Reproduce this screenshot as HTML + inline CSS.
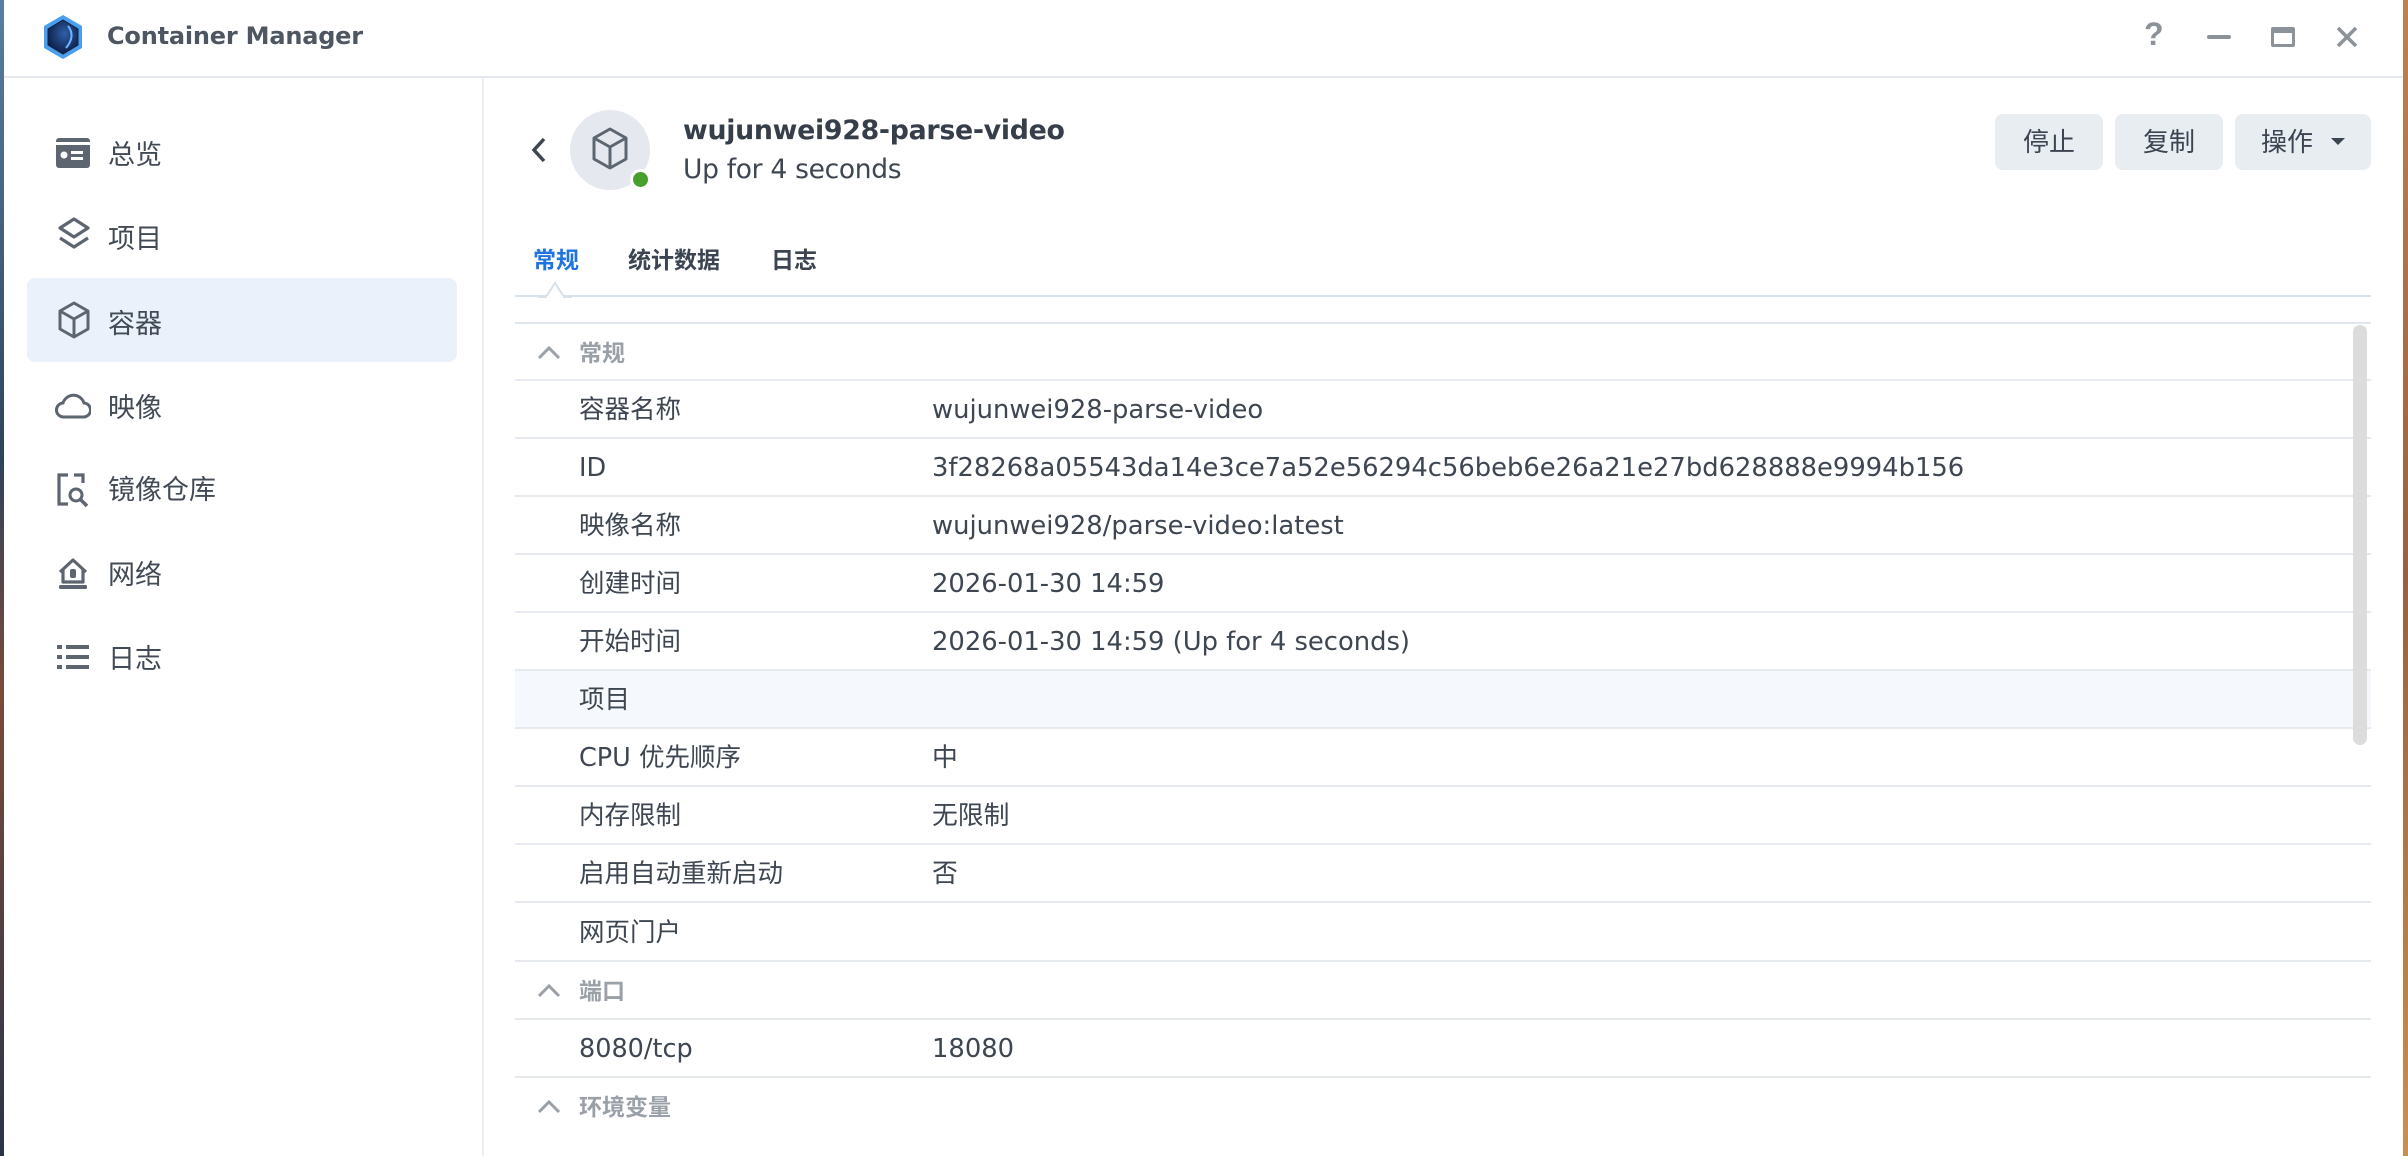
<!DOCTYPE html>
<html><head><meta charset="utf-8">
<style>
*{margin:0;padding:0;box-sizing:border-box}
body{width:2408px;height:1156px;overflow:hidden;background:#fff;position:relative;font-family:"DejaVu Sans","Liberation Sans","Noto Sans CJK SC",sans-serif;color:#3d4651}
.a{position:absolute}
.cjk{font-family:"Liberation Sans","Noto Sans CJK SC",sans-serif}
.side{font-size:27px;color:#414a55;left:108px}
.ic{position:absolute;left:55px}
.row{position:absolute;left:515px;width:1856px;height:58px;border-bottom:2px solid #e6eaef}
.row .l{position:absolute;left:64px;top:0;line-height:58px;font-size:25.5px;font-family:"DejaVu Sans","Noto Sans CJK SC",sans-serif}
.row .v{position:absolute;left:417px;top:0;line-height:58px;font-size:25.8px;font-family:"DejaVu Sans","Noto Sans CJK SC",sans-serif}
.hd .l{left:64px;color:#9aa0a7;font-weight:bold;font-size:23px;font-family:"Liberation Sans","Noto Sans CJK SC",sans-serif}
.chev{position:absolute;left:22px;top:22px}
.btn{position:absolute;top:114px;height:56px;background:#e8edf2;border-radius:8px;font-size:26px;line-height:56px;text-align:center;color:#3b4450;font-family:"Liberation Sans","Noto Sans CJK SC",sans-serif}
</style></head><body>
<div class="a" style="left:0;top:0;width:4px;height:1156px;background:linear-gradient(#5a7ea0,#30425a 40%,#7a4a3a 60%,#2a3448)"></div>
<div class="a" style="left:2403px;top:0;width:5px;height:1156px;background:linear-gradient(#c08050,#9a6040 50%,#c89050)"></div>

<!-- title bar -->
<svg class="a" style="left:40px;top:14px" width="46" height="46" viewBox="0 0 46 46">
<defs><radialGradient id="g" cx="0.55" cy="0.4" r="0.6"><stop offset="0" stop-color="#2d5fa8"/><stop offset="1" stop-color="#0d1f48"/></radialGradient></defs>
<polygon points="23,1 42,12 42,34 23,45 4,34 4,12" fill="#4a9ef0"/>
<polygon points="23,6 38,15 38,31 23,40 8,31 8,15" fill="url(#g)" stroke="#123" stroke-width="1"/>
<path d="M28 12 Q36 22 26 34" stroke="#6fb4ff" stroke-width="2" fill="none"/>
</svg>
<div class="a" style="left:107px;top:22px;font-size:24px;font-weight:bold;color:#4d5661;font-family:'DejaVu Sans',sans-serif;letter-spacing:-0.2px">Container Manager</div>
<div class="a" style="left:2144px;top:16px;font-size:32px;color:#8c9299;font-family:'Liberation Sans',sans-serif;font-weight:bold">?</div>
<div class="a" style="left:2207px;top:35px;width:24px;height:4px;background:#8c9299;border-radius:2px"></div>
<div class="a" style="left:2271px;top:27px;width:24px;height:20px;border:3px solid #8c9299;border-top-width:6px;border-radius:2px"></div>
<svg class="a" style="left:2336px;top:26px" width="22" height="22"><path d="M2 2L20 20M20 2L2 20" stroke="#8c9299" stroke-width="3.5"/></svg>
<div class="a" style="left:4px;top:76px;width:2399px;height:2px;background:#e3e8ee"></div>

<!-- sidebar -->
<div class="a" style="left:482px;top:78px;width:2px;height:1078px;background:#eceff2"></div>
<div class="a" style="left:27px;top:278px;width:430px;height:84px;background:#eaf1fb;border-radius:8px"></div>
<svg class="ic" style="top:137px" width="36" height="32"><rect x="1" y="1" width="34" height="30" rx="3" fill="#5d6670"/><rect x="1" y="5" width="34" height="3" fill="#fff"/><circle cx="9" cy="18" r="3.5" fill="#fff"/><rect x="16" y="14" width="12" height="3" fill="#fff"/><rect x="16" y="20" width="12" height="3" fill="#fff"/></svg>
<div class="a side cjk" style="top:133px">总览</div>
<svg class="ic" style="top:217px;left:57px" width="34" height="36"><path d="M17 2L31 11L17 20L3 11Z" fill="none" stroke="#5d6670" stroke-width="3.2" stroke-linejoin="round"/><path d="M3 21L17 30L31 21" fill="none" stroke="#5d6670" stroke-width="3.2" stroke-linejoin="round"/></svg>
<div class="a side cjk" style="top:217px">项目</div>
<svg class="ic" style="top:301px;left:57px" width="34" height="38"><path d="M17 2L31 10V28L17 36L3 28V10Z M3 10L17 18L31 10 M17 18V36" fill="none" stroke="#5d6670" stroke-width="3" stroke-linejoin="round"/></svg>
<div class="a side cjk" style="top:302px">容器</div>
<svg class="ic" style="top:392px" width="36" height="28"><path d="M9 25H28A7 7 0 0 0 29 11A11 11 0 0 0 8 11A7 7 0 0 0 9 25Z" fill="none" stroke="#5d6670" stroke-width="3"/></svg>
<div class="a side cjk" style="top:386px">映像</div>
<svg class="ic" style="top:473px;left:56px" width="34" height="36"><path d="M12 2H3V31H12 M18 2H27V10" fill="none" stroke="#5d6670" stroke-width="3.2"/><circle cx="20" cy="22" r="6" fill="none" stroke="#5d6670" stroke-width="3"/><path d="M24 26L31 33" stroke="#5d6670" stroke-width="3.5"/></svg>
<div class="a side cjk" style="top:468px">镜像仓库</div>
<svg class="ic" style="top:556px;left:56px" width="34" height="36"><path d="M4 16L17 4L30 16 M7 14V26H27V14" fill="none" stroke="#5d6670" stroke-width="3.2" stroke-linejoin="round"/><rect x="14" y="13" width="6" height="9" rx="2" fill="#5d6670"/><rect x="3" y="29" width="28" height="4" rx="1.5" fill="#5d6670"/></svg>
<div class="a side cjk" style="top:553px">网络</div>
<svg class="ic" style="top:644px;left:56px" width="34" height="28"><rect x="1" y="1" width="5" height="4" fill="#5d6670"/><rect x="10" y="1" width="23" height="4" fill="#5d6670"/><rect x="1" y="11" width="5" height="4" fill="#5d6670"/><rect x="10" y="11" width="23" height="4" fill="#5d6670"/><rect x="1" y="21" width="5" height="4" fill="#5d6670"/><rect x="10" y="21" width="23" height="4" fill="#5d6670"/></svg>
<div class="a side cjk" style="top:637px">日志</div>

<!-- header -->
<svg class="a" style="left:530px;top:136px" width="18" height="28"><path d="M14 3L4 14L14 25" fill="none" stroke="#3d4651" stroke-width="3.5"/></svg>
<div class="a" style="left:570px;top:110px;width:80px;height:80px;border-radius:50%;background:#e5e9ef"></div>
<svg class="a" style="left:590px;top:126px" width="40" height="46"><path d="M20 3L36 12V33L20 42L4 33V12Z M4 12L20 21L36 12 M20 21V42" fill="none" stroke="#5d6670" stroke-width="3" stroke-linejoin="round"/></svg>
<div class="a" style="left:630px;top:169px;width:21px;height:21px;border-radius:50%;background:#48a02c;border:3px solid #fff"></div>
<div class="a" style="left:683px;top:115px;font-size:26.8px;font-weight:bold;color:#363f49;letter-spacing:-0.3px">wujunwei928-parse-video</div>
<div class="a" style="left:683px;top:154px;font-size:26.5px;color:#3d4651;font-family:'DejaVu Sans',sans-serif;letter-spacing:-0.3px">Up for 4 seconds</div>
<div class="btn" style="left:1995px;width:108px">停止</div>
<div class="btn" style="left:2115px;width:108px">复制</div>
<div class="btn" style="left:2235px;width:136px;text-align:left;padding-left:26px">操作<svg style="position:absolute;left:96px;top:24px" width="14" height="8"><path d="M0 0H14L7 7Z" fill="#3b4450"/></svg></div>

<!-- tabs -->
<div class="a cjk" style="left:533px;top:241px;font-size:23px;font-weight:bold;color:#1e74e0">常规</div>
<div class="a cjk" style="left:628px;top:241px;font-size:23px;font-weight:bold;color:#3b4450">统计数据</div>
<div class="a cjk" style="left:771px;top:241px;font-size:23px;font-weight:bold;color:#3b4450">日志</div>
<div class="a" style="left:515px;top:295px;width:1856px;height:2px;background:#d9e1e9"></div>
<svg class="a" style="left:538px;top:281px" width="34" height="18"><path d="M0 16H8L17 2L26 16H34" fill="#fff" stroke="#d9e1e9" stroke-width="2"/><rect x="9" y="15" width="16" height="3" fill="#fff"/></svg>
<div class="a" style="left:515px;top:322px;width:1856px;height:2px;background:#e1e7ee"></div>

<!-- table -->
<div class="row hd" style="top:324px;height:57px"><svg class="chev" width="24" height="14"><path d="M2 12L12 2L22 12" fill="none" stroke="#9aa0a7" stroke-width="3"/></svg><div class="l cjk">常规</div></div>
<div class="row" style="top:381px"><div class="l">容器名称</div><div class="v">wujunwei928-parse-video</div></div>
<div class="row" style="top:439px"><div class="l">ID</div><div class="v">3f28268a05543da14e3ce7a52e56294c56beb6e26a21e27bd628888e9994b156</div></div>
<div class="row" style="top:497px"><div class="l">映像名称</div><div class="v">wujunwei928/parse-video:latest</div></div>
<div class="row" style="top:555px"><div class="l">创建时间</div><div class="v">2026-01-30 14:59</div></div>
<div class="row" style="top:613px"><div class="l">开始时间</div><div class="v">2026-01-30 14:59 (Up for 4 seconds)</div></div>
<div class="row" style="top:671px;background:#f5f8fc"><div class="l">项目</div></div>
<div class="row" style="top:729px"><div class="l">CPU 优先顺序</div><div class="v">中</div></div>
<div class="row" style="top:787px"><div class="l">内存限制</div><div class="v">无限制</div></div>
<div class="row" style="top:845px"><div class="l">启用自动重新启动</div><div class="v">否</div></div>
<div class="row" style="top:904px"><div class="l">网页门户</div></div>
<div class="row hd" style="top:962px"><svg class="chev" width="24" height="14"><path d="M2 12L12 2L22 12" fill="none" stroke="#9aa0a7" stroke-width="3"/></svg><div class="l cjk">端口</div></div>
<div class="row" style="top:1020px"><div class="l">8080/tcp</div><div class="v">18080</div></div>
<div class="row hd" style="top:1078px;border-bottom:none"><svg class="chev" width="24" height="14"><path d="M2 12L12 2L22 12" fill="none" stroke="#9aa0a7" stroke-width="3"/></svg><div class="l cjk">环境变量</div></div>

<div class="a" style="left:2353px;top:325px;width:14px;height:420px;border-radius:7px;background:#dcdcdc"></div>
</body></html>
